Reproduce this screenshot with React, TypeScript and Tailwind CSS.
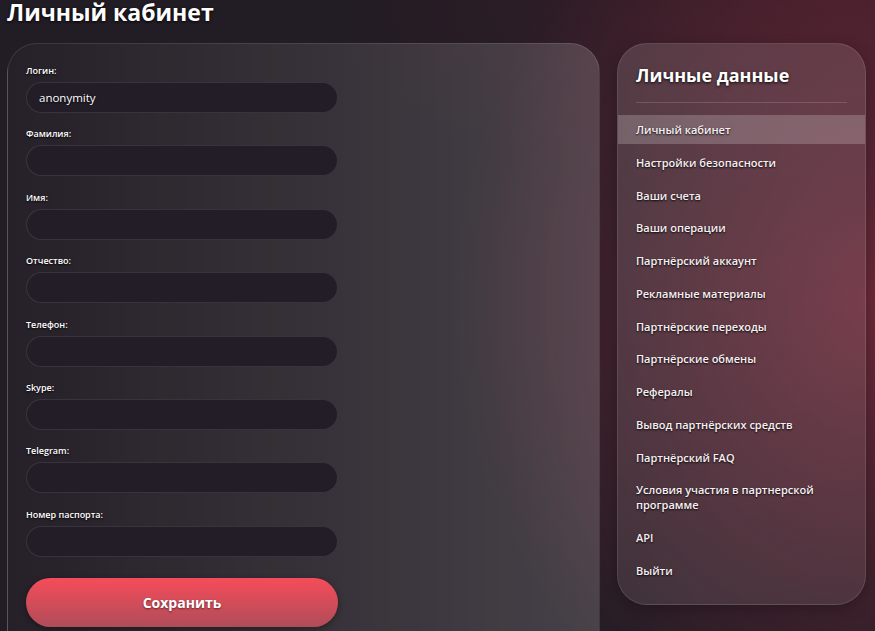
import type { ReactNode } from "react";

const fields = [
  { label: "Логин:", value: "anonymity" },
  { label: "Фамилия:", value: "" },
  { label: "Имя:", value: "" },
  { label: "Отчество:", value: "" },
  { label: "Телефон:", value: "" },
  { label: "Skype:", value: "" },
  { label: "Telegram:", value: "" },
  { label: "Номер паспорта:", value: "" },
];

const menu = [
  "Личный кабинет",
  "Настройки безопасности",
  "Ваши счета",
  "Ваши операции",
  "Партнёрский аккаунт",
  "Рекламные материалы",
  "Партнёрские переходы",
  "Партнёрские обмены",
  "Рефералы",
  "Вывод партнёрских средств",
  "Партнёрский FAQ",
  "Условия участия в партнерской программе",
  "API",
  "Выйти",
];

function Field({ label, value }: { label: string; value: string }) {
  return (
    <label className="flex flex-col">
      <span className="text-[9px] leading-[14px] font-semibold text-white mb-1 [text-shadow:0_1px_2px_rgba(0,0,0,0.9)]">
        {label}
      </span>
      <input
        defaultValue={value}
        className="w-[312px] h-[31px] rounded-full bg-[#221d27] border border-white/10 px-3 text-[11.5px] font-medium text-white outline-none [text-shadow:0_1px_2px_rgba(0,0,0,0.8)]"
      />
    </label>
  );
}

function Panel({ className, children }: { className: string; children: ReactNode }) {
  return <div className={`rounded-[30px] border border-white/10 ${className}`}>{children}</div>;
}

export default function App() {
  return (
    <div className="min-h-screen overflow-hidden bg-[#221c24] bg-[radial-gradient(ellipse_420px_480px_at_100%_45%,rgba(135,45,65,0.7),transparent),radial-gradient(ellipse_500px_200px_at_95%_0%,rgba(90,30,45,0.4),transparent)] font-['Open_Sans',sans-serif] pl-[7px] pr-[9px]">
      <h1 className="text-[23px] leading-6 font-bold text-white [text-shadow:0_1px_3px_rgba(0,0,0,0.9)]">
        Личный кабинет
      </h1>

      <div className="flex gap-[17px] mt-[19px] items-start">
        <Panel className="w-[593px] bg-[linear-gradient(to_right,rgba(255,255,255,0.02),rgba(255,255,255,0.17))] pt-5 pl-[18px] pb-10">
          <form className="flex flex-col gap-[14.4px]">
            {fields.map((f) => (
              <Field key={f.label} label={f.label} value={f.value} />
            ))}
            <button
              type="button"
              className="mt-[7px] w-[312px] h-[49px] rounded-full bg-[linear-gradient(to_bottom,#f64c59,#b04c59)] text-[14px] font-bold text-white [text-shadow:0_1px_2px_rgba(0,0,0,0.5)] shadow-[0_2px_6px_rgba(0,0,0,0.35)]"
            >
              Сохранить
            </button>
          </form>
        </Panel>

        <Panel className="w-[249px] bg-[linear-gradient(160deg,rgba(255,255,255,0.13),rgba(255,255,255,0.1)_60%,rgba(255,255,255,0.09))] pt-[19px] pb-[19px] shadow-[0_4px_14px_rgba(0,0,0,0.25)]">
          <h2 className="px-[18px] text-[18px] leading-6 font-bold text-white [text-shadow:0_1px_3px_rgba(0,0,0,0.9)]">
            Личные данные
          </h2>
          <div className="mx-[18px] mt-[15px] mb-[12px] h-px bg-white/15" />
          <nav className="flex flex-col gap-[3.75px]">
            {menu.map((item, i) => (
              <a
                key={item}
                href="#"
                className={`block px-[18px] py-[7px] text-[11px] leading-[15px] font-semibold text-[#f7f0f2] [text-shadow:0_1px_2px_rgba(0,0,0,0.9)] ${
                  i === 0 ? "bg-white/20" : ""
                }`}
              >
                {item}
              </a>
            ))}
          </nav>
        </Panel>
      </div>
    </div>
  );
}
